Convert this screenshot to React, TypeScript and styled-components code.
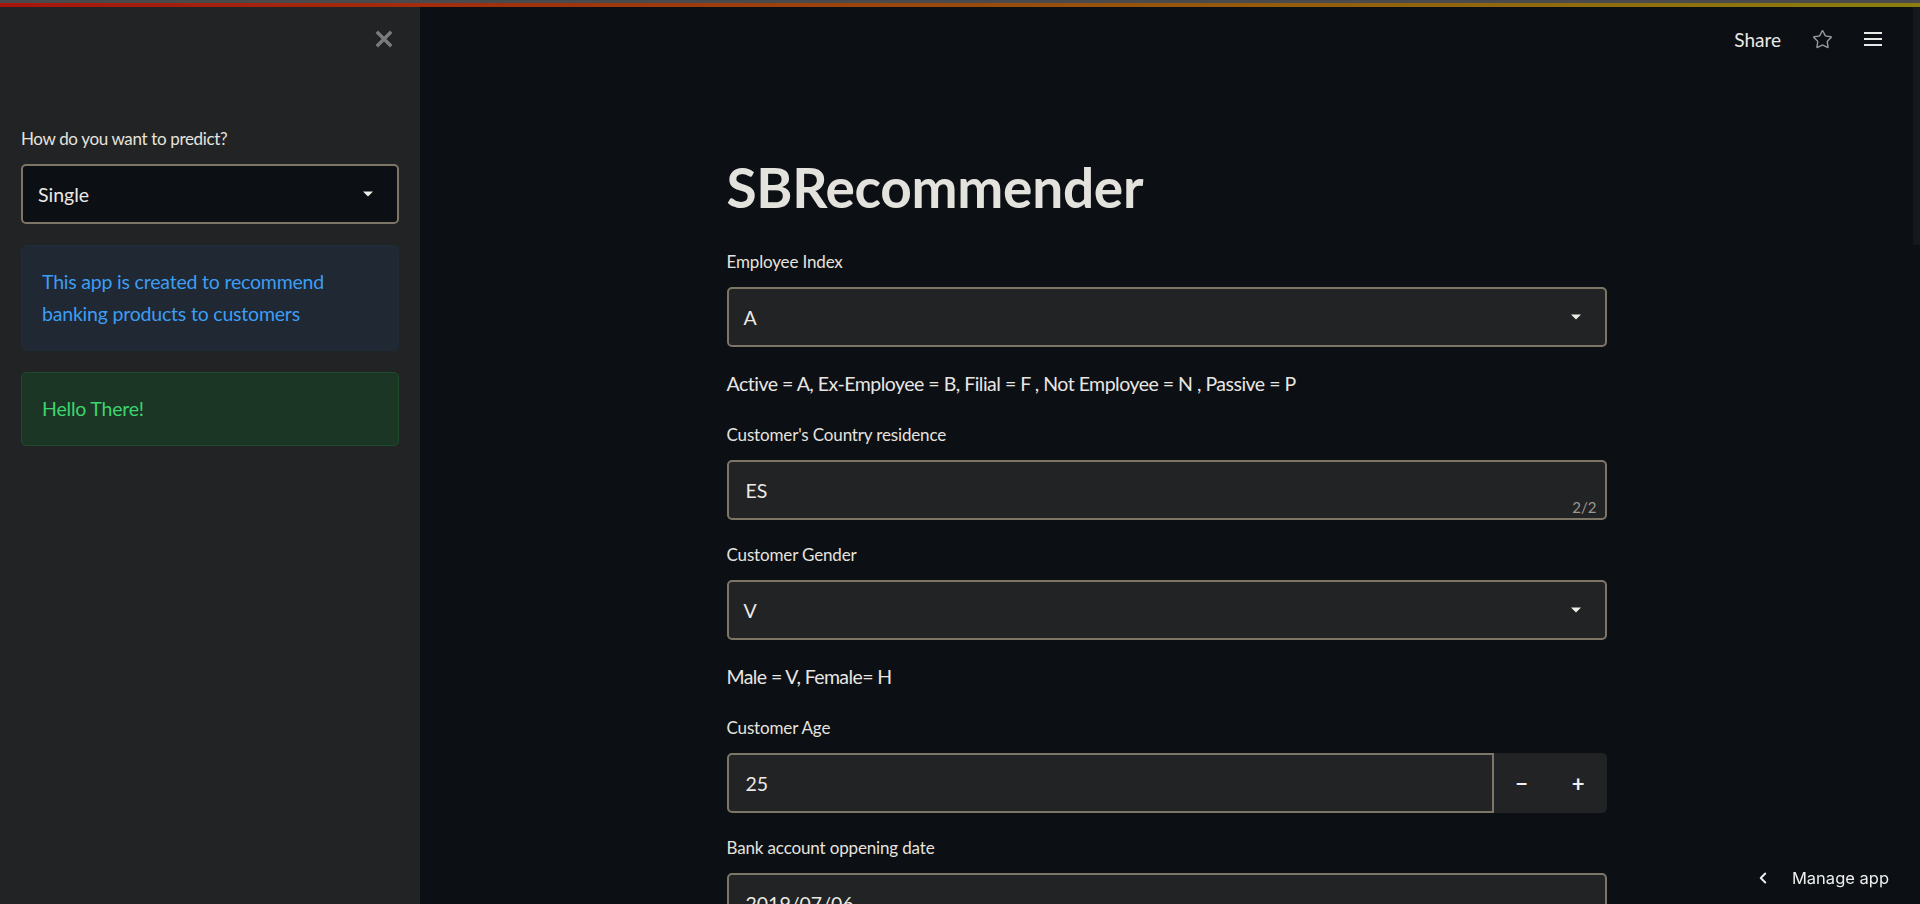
import React from "react";
import styled, { createGlobalStyle } from "styled-components";
import { ChevronLeft, Star } from "lucide-react";

const FONT = `Lato, "Noto Sans", sans-serif`;

const GlobalStyle = createGlobalStyle`
  html, body {
    margin: 0;
    padding: 0;
    height: 100%;
    overflow: hidden;
    background: #0c0f14;
    font-family: ${FONT};
  }
  * { box-sizing: border-box; }
`;

const Page = styled.div`
  display: flex;
  flex-direction: column;
  width: 1920px;
  height: 904px;
  overflow: hidden;
`;

const Decoration = styled.div`
  flex: none;
  height: 7px;
  border-top: 3px solid #4a4a4c;
  background: linear-gradient(90deg, #a8150d 0%, #9a4a0c 50%, #8b7f0e 100%);
`;

const Body = styled.div`
  flex: 1;
  display: flex;
  min-height: 0;
`;

const Sidebar = styled.aside`
  flex: none;
  width: 420px;
  background: #212325;
  padding: 0 21px 0 21px;
  display: flex;
  flex-direction: column;
`;

const SidebarTop = styled.div`
  height: 64px;
  display: flex;
  align-items: center;
  justify-content: flex-end;
  padding-right: 5px;
`;

const CloseButton = styled.button`
  border: none;
  background: none;
  padding: 0;
  width: 20px;
  height: 20px;
  display: flex;
  align-items: center;
  justify-content: center;
  cursor: pointer;
`;

const SidebarContent = styled.div`
  margin-top: 54px;
  display: flex;
  flex-direction: column;
  gap: 21px;
`;

const Main = styled.main`
  flex: 1;
  display: flex;
  flex-direction: column;
  min-width: 0;
  overflow: hidden;
`;

const Header = styled.header`
  flex: none;
  height: 64px;
  display: flex;
  align-items: center;
  justify-content: flex-end;
  padding-right: 31px;
`;

const ShareLink = styled.span`
  font-size: 19px;
  color: #ece9e4;
  margin-right: 31px;
`;

const IconButton = styled.span<{ $gap?: number }>`
  display: flex;
  align-items: center;
  justify-content: center;
  margin-right: ${({ $gap }) => $gap ?? 0}px;
`;

const Column = styled.div`
  width: 880px;
  margin: 83px auto 0;
  display: flex;
  flex-direction: column;
  gap: 21px;
`;

const Title = styled.h1`
  margin: 0 0 7px;
  font-size: 55px;
  line-height: 66px;
  font-weight: 700;
  color: #e4e2dd;
  letter-spacing: -0.3px;
`;

const Block = styled.div`
  display: flex;
  flex-direction: column;
  gap: 11px;
`;

const Label = styled.label<{ $tracking?: number }>`
  font-size: 17px;
  line-height: 28px;
  color: #e6e3de;
  letter-spacing: ${({ $tracking }) => $tracking ?? -0.15}px;
`;

const Paragraph = styled.p<{ $color?: string; $tracking?: number }>`
  margin: 0;
  font-size: 19.5px;
  line-height: 32px;
  color: ${({ $color }) => $color ?? "#e8e6e3"};
  letter-spacing: ${({ $tracking }) => $tracking ?? 0}px;
`;

const SelectBox = styled.div<{ $dark?: boolean }>`
  height: 60px;
  border: 2px solid #7d7566;
  border-radius: 5px;
  background: ${({ $dark }) => ($dark ? "#0c0f14" : "#212325")};
  display: flex;
  align-items: center;
  justify-content: space-between;
  padding: 0 24px 0 15px;
  font-size: 19.5px;
  color: #ece9e4;
`;

const InputBox = styled.div`
  position: relative;
  height: 60px;
  border: 2px solid #7d7566;
  border-radius: 5px;
  background: #212325;
  display: flex;
  align-items: center;
  padding: 0 17px;
  font-size: 19.5px;
  color: #ece9e4;
`;

const Counter = styled.span`
  position: absolute;
  right: 8px;
  bottom: 2px;
  font-size: 15px;
  color: #9d9891;
`;

const NumberRow = styled.div`
  height: 60px;
  display: flex;
`;

const NumberField = styled.div`
  flex: 1;
  border: 2px solid #7d7566;
  border-radius: 5px 0 0 5px;
  background: #212325;
  display: flex;
  align-items: center;
  padding: 0 17px;
  font-size: 19.5px;
  color: #ece9e4;
`;

const Steppers = styled.div`
  flex: none;
  width: 113px;
  display: flex;
  background: #212325;
  border-radius: 0 5px 5px 0;
`;

const StepButton = styled.button`
  flex: 1;
  border: none;
  background: none;
  color: #f2f0ec;
  font-family: ${FONT};
  font-size: 22px;
  font-weight: 700;
  cursor: pointer;
  padding: 0;
`;

const Callout = styled.div<{ $bg: string; $border: string }>`
  border: 1px solid ${({ $border }) => $border};
  background: ${({ $bg }) => $bg};
  border-radius: 5px;
  padding: 20px 20px;
`;

const ScrollTrack = styled.div`
  flex: none;
  width: 7px;
  background: #0c0f14;
`;

const ScrollThumb = styled.div`
  height: 238px;
  background: #16181c;
`;

const ManageApp = styled.div`
  position: fixed;
  right: 31px;
  bottom: 16px;
  display: flex;
  align-items: center;
  gap: 20px;
  font-family: Inter, ${FONT};
  font-size: 16.5px;
  color: #eeeeee;
`;

const Caret = () => (
  <svg width="10" height="6" viewBox="0 0 10 6">
    <path d="M0 0.5 L10 0.5 L5 5.5 Z" fill="#f0eee9" />
  </svg>
);

const CloseIcon = () => (
  <svg width="18" height="18" viewBox="0 0 18 18">
    <path
      d="M3 3 L15 15 M15 3 L3 15"
      stroke="#7b7b7b"
      strokeWidth="3.4"
      strokeLinecap="square"
    />
  </svg>
);

const MenuIcon = () => (
  <svg width="18" height="16" viewBox="0 0 18 16">
    <rect x="0" y="1" width="18" height="2" fill="#e8e8e8" />
    <rect x="0" y="7" width="18" height="2" fill="#e8e8e8" />
    <rect x="0" y="13" width="18" height="2" fill="#e8e8e8" />
  </svg>
);

const Select = ({ value, dark }: { value: string; dark?: boolean }) => (
  <SelectBox $dark={dark}>
    <span>{value}</span>
    <Caret />
  </SelectBox>
);

export default function App() {
  return (
    <>
      <GlobalStyle />
      <Page>
        <Decoration />
        <Body>
          <Sidebar>
            <SidebarTop>
              <CloseButton aria-label="Close sidebar">
                <CloseIcon />
              </CloseButton>
            </SidebarTop>
            <SidebarContent>
              <Block>
                <Label $tracking={-0.35}>How do you want to predict?</Label>
                <Select value="Single" dark />
              </Block>
              <Callout $bg="#1f2833" $border="#1e2b3a">
                <Paragraph $color="#3d9df3" $tracking={-0.2}>
                  This app is created to recommend banking products to customers
                </Paragraph>
              </Callout>
              <Callout $bg="#1c3626" $border="#1f4a2b">
                <Paragraph $color="#3dd56d" $tracking={-0.2}>
                  Hello There!
                </Paragraph>
              </Callout>
            </SidebarContent>
          </Sidebar>
          <Main>
            <Header>
              <ShareLink>Share</ShareLink>
              <IconButton $gap={31}>
                <Star size={21} color="#9a9a9a" strokeWidth={1.6} />
              </IconButton>
              <IconButton>
                <MenuIcon />
              </IconButton>
            </Header>
            <Column>
              <Title>SBRecommender</Title>
              <Block>
                <Label>Employee Index</Label>
                <Select value="A" />
              </Block>
              <Paragraph $tracking={-0.5}>
                Active = A, Ex-Employee = B, Filial = F , Not Employee = N , Passive = P
              </Paragraph>
              <Block>
                <Label>Customer's Country residence</Label>
                <InputBox>
                  ES
                  <Counter>2/2</Counter>
                </InputBox>
              </Block>
              <Block>
                <Label>Customer Gender</Label>
                <Select value="V" />
              </Block>
              <Paragraph $tracking={-0.6}>Male = V, Female= H</Paragraph>
              <Block>
                <Label>Customer Age</Label>
                <NumberRow>
                  <NumberField>25</NumberField>
                  <Steppers>
                    <StepButton>−</StepButton>
                    <StepButton>+</StepButton>
                  </Steppers>
                </NumberRow>
              </Block>
              <Block>
                <Label>Bank account oppening date</Label>
                <InputBox>2019/07/06</InputBox>
              </Block>
            </Column>
          </Main>
          <ScrollTrack>
            <ScrollThumb />
          </ScrollTrack>
        </Body>
      </Page>
      <ManageApp>
        <ChevronLeft size={18} color="#eeeeee" strokeWidth={2.6} />
        <span>Manage app</span>
      </ManageApp>
    </>
  );
}
